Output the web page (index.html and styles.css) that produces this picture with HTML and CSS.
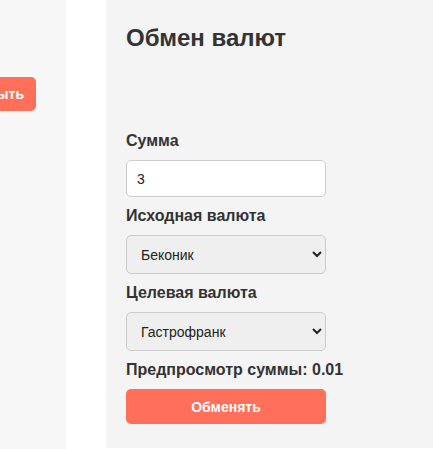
FILE: index.html
```html
<!DOCTYPE html>
<html lang="ru">
<head>
<meta charset="utf-8">
<title>Обмен валют</title>
<link rel="stylesheet" href="styles.css">
</head>
<body>
<div class="layout">
  <aside class="sidebar">
    <button class="open-btn" type="button">Открыть</button>
  </aside>
  <main class="panel">
    <h2 class="title">Обмен валют</h2>
    <div class="spacer"></div>
    <form class="form">
      <label class="label" for="amount">Сумма</label>
      <input class="field" id="amount" type="text" value="3">
      <label class="label" for="from">Исходная валюта</label>
      <select class="field select" id="from">
        <option>Беконик</option>
      </select>
      <label class="label" for="to">Целевая валюта</label>
      <select class="field select" id="to">
        <option>Гастрофранк</option>
      </select>
      <p class="preview">Предпросмотр суммы: 0.01</p>
      <button class="submit" type="button">Обменять</button>
    </form>
  </main>
</div>
</body>
</html>
```
FILE: styles.css
```css
html, body {
  margin: 0;
  padding: 0;
  background: #ffffff;
  font-family: "Liberation Sans", Arial, sans-serif;
}

.layout {
  display: flex;
  gap: 40px;
  align-items: flex-start;
}

.sidebar {
  width: 66px;
  flex: 0 0 66px;
  height: 449px;
  background: #f7f7f7;
  display: flex;
  justify-content: flex-end;
  align-items: flex-start;
  padding: 77px 30px 0 0;
  box-sizing: border-box;
  overflow: visible;
}

.open-btn {
  flex: 0 0 auto;
  background: #ff6f59;
  color: #ffffff;
  border: none;
  border-radius: 5px;
  height: 34px;
  padding: 0 12px;
  font-family: "Liberation Sans", Arial, sans-serif;
  font-weight: bold;
  font-size: 14px;
}

.panel {
  flex: 1;
  background: #f4f4f4;
  padding: 24px 20px 24px 20px;
  height: 448px;
  box-sizing: border-box;
}

.title {
  margin: 0;
  font-size: 24px;
  font-weight: bold;
  color: #333333;
  line-height: 28px;
}

.spacer {
  height: 80px;
}

.form {
  display: flex;
  flex-direction: column;
  align-items: flex-start;
}

.label {
  font-size: 16px;
  font-weight: bold;
  color: #333333;
  line-height: 18px;
  margin-bottom: 10px;
}

.field {
  width: 200px;
  box-sizing: border-box;
  border: 1px solid #cccccc;
  border-radius: 5px;
  padding: 10px;
  font-family: "Liberation Sans", Arial, sans-serif;
  font-size: 14px;
  color: #222222;
  background: #ffffff;
  margin: 0 0 10px 0;
}

input.field {
  height: 37px;
}

.select {
  height: 39px;
  background: #efefef;
}

.preview {
  margin: 0 0 10px 0;
  font-size: 16px;
  font-weight: bold;
  color: #333333;
  line-height: 18px;
  white-space: nowrap;
}

.submit {
  width: 200px;
  height: 35px;
  background: #ff6f59;
  color: #ffffff;
  border: none;
  border-radius: 5px;
  font-family: "Liberation Sans", Arial, sans-serif;
  font-weight: bold;
  font-size: 14px;
}
```
